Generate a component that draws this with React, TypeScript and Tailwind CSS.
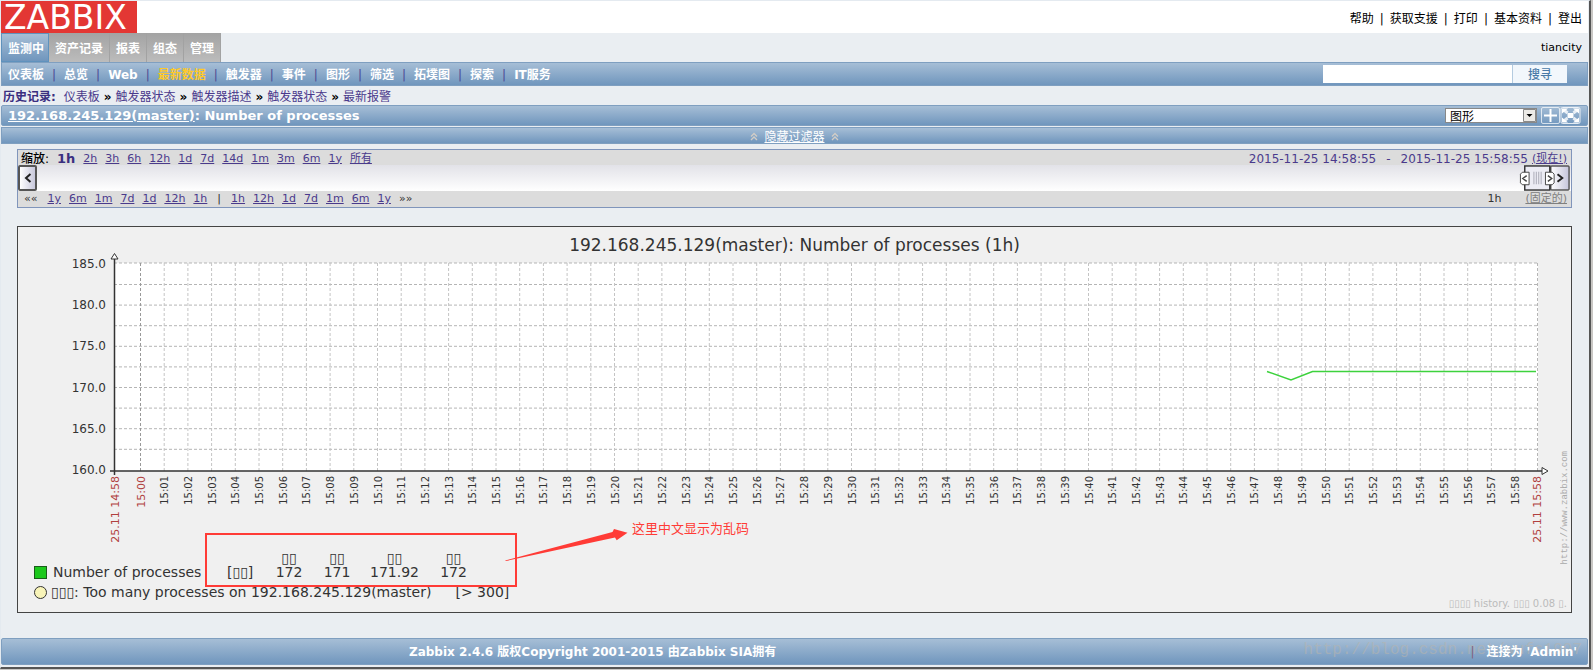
import type { ReactNode } from "react";

const MENU = ["资产记录", "报表", "组态", "管理"];
const SUBMENU = ["仪表板", "总览", "Web", "最新数据", "触发器", "事件", "图形", "筛选", "拓墣图", "探索", "IT服务"];
const HISTORY = ["仪表板", "触发器状态", "触发器描述", "触发器状态", "最新报警"];
const TOP_LINKS = ["帮助", "获取支援", "打印", "基本资料", "登出"];
const ZOOMS = ["2h", "3h", "6h", "12h", "1d", "7d", "14d", "1m", "3m", "6m", "1y", "所有"];
const MOVE_LEFT = ["1y", "6m", "1m", "7d", "1d", "12h", "1h"];
const MOVE_RIGHT = ["1h", "12h", "1d", "7d", "1m", "6m", "1y"];

const pad = (n: number) => String(n).padStart(2, "0");

function Bar({ className, children }: { className: string; children: ReactNode }) {
  return (
    <div className={`flex items-center border border-[#7f9fc0] bg-linear-to-b from-[#a6bed6] to-[#7096bd] ${className}`}>
      {children}
    </div>
  );
}

function ZoomLink({ children }: { children: ReactNode }) {
  return (
    <a href="#" className="text-[#4a3a8c] underline">
      {children}
    </a>
  );
}

function Chevrons() {
  return (
    <svg width="8" height="9" viewBox="0 0 8 9" fill="none" stroke="#d2cdc6" strokeWidth="1.3" aria-hidden="true">
      <path d="M1 4.5 4 1.5 7 4.5M1 8 4 5 7 8" />
    </svg>
  );
}

function Header() {
  return (
    <header className="text-[12px]">
      <div className="flex h-8 items-center justify-between bg-white pr-1.5">
        <a href="#" aria-label="ZABBIX" className="h-8 w-[136px] bg-[#e33734]">
          <svg width="136" height="32" viewBox="0 0 136 32" className="overflow-visible" aria-hidden="true">
            <text x="3" y="28" fontSize="33" fill="#fff">
              ZABBIX
            </text>
          </svg>
        </a>
        <nav className="flex items-center gap-1.5 pt-1 text-black">
          {TOP_LINKS.map((link, i) => (
            <span key={link} className="flex gap-1.5">
              {i > 0 && <span>|</span>}
              <a href="#">{link}</a>
            </span>
          ))}
        </nav>
      </div>

      <div className="flex h-[29px] items-stretch justify-between pr-1.5">
        <nav className="flex font-bold text-white">
          <a href="#" className="flex items-center border border-[#5f92bd] bg-linear-to-b from-[#a6bed6] to-[#7096bd] pt-0.5 pr-1 pl-1.5">
            监测中
          </a>
          {MENU.map((item) => (
            <a key={item} href="#" className="flex items-center border-r border-[#a2a2a2] bg-linear-to-b from-[#a3a3a3] to-[#bcbcbc] px-1.5 pt-0.5">
              {item}
            </a>
          ))}
        </nav>
        <span className="self-center text-[11px] text-black">tiancity</span>
      </div>

      <Bar className="h-6 justify-between pr-5 pl-1.5">
        <nav className="flex items-center pt-0.5 font-bold text-white">
          {SUBMENU.map((item, i) => (
            <span key={item} className="flex">
              {i > 0 && <span className="mx-2 font-normal text-[#4a4a94]">|</span>}
              <a href="#" className={item === "最新数据" ? "text-[#fec92a]" : ""}>
                {item}
              </a>
            </span>
          ))}
        </nav>
        <form className="flex h-[18px]">
          <input type="text" aria-label="搜寻" className="w-[190px] border-r border-[#b4cbe0] bg-white px-1" />
          <button type="button" className="w-[54px] bg-[#f2f7fc] pt-0.5 font-medium text-[#4a7aa8]">
            搜寻
          </button>
        </form>
      </Bar>

      <nav className="flex h-[19px] items-center gap-1 pt-0.5 pl-0.5 text-[#4a3a8c]">
        <b className="mr-1 text-[#3a2f80]">历史记录:</b>
        {HISTORY.map((item, i) => (
          <span key={i} className="flex gap-1">
            {i > 0 && <b className="text-black">»</b>}
            <a href="#">{item}</a>
          </span>
        ))}
      </nav>
    </header>
  );
}

function TitleBar() {
  return (
    <>
      <Bar className="h-[21px] justify-between rounded-xs pr-1.5 pl-1.5">
        <h1 className="text-[13px] font-bold text-white">
          <a href="#" className="underline">
            192.168.245.129(master)
          </a>
          : Number of processes
        </h1>
        <div className="flex items-center gap-1">
          <div className="relative flex h-[15px] w-[92px] bg-white">
            <select aria-label="图形" className="w-full appearance-none border border-[#888] bg-white pl-1 text-[12px] text-black">
              <option>图形</option>
            </select>
            <svg className="pointer-events-none absolute top-px right-px" width="13" height="13" viewBox="0 0 13 13" aria-hidden="true">
              <path d="M.5.5h12v12H.5z" fill="#eceae6" stroke="#8a8a8a" />
              <path d="M3.5 5h6l-3 3z" fill="#000" />
            </svg>
          </div>
          <div className="flex">
            <button type="button" aria-label="添加">
              <svg width="19" height="17" viewBox="0 0 19 17" fill="none" stroke="#fff">
                <rect x=".5" y=".5" width="18" height="16" rx="1.5" strokeOpacity=".7" />
                <path d="M9.5 2v13M3 8.500h13" strokeWidth="2" />
              </svg>
            </button>
            <button type="button" aria-label="全屏">
              <svg width="21" height="17" viewBox="0 0 21 17" fill="none" stroke="#fff">
                <rect x="1" y=".5" width="19" height="16" rx="1.5" strokeOpacity=".8" />
                <path d="M4 3l3.500 3M17 3l-3.500 3M4 14l3.500-3M17 14l-3.500-3" strokeWidth="3" strokeOpacity=".8" />
                <path d="M2 1.500h6l-6 5zM19 1.500h-6l6 5zM2 15.500h6l-6-5zM19 15.500h-6l6-5zM7.500 6h6v5h-6z" fill="#fff" stroke="none" />
              </svg>
            </button>
          </div>
        </div>
      </Bar>
      <Bar className="mt-px h-[17px] justify-center gap-1.5 pt-0.5">
        <Chevrons />
        <a href="#" className="text-[12px] text-white underline">
          隐藏过滤器
        </a>
        <Chevrons />
      </Bar>
    </>
  );
}

function TimeControl() {
  return (
    <section className="mx-4 mt-[5px] border border-[#8095bb] bg-[#dcdcdc]">
      <div className="flex h-[15px] items-center justify-between pt-0.5 pr-1 pl-[3px]">
        <div className="flex items-center gap-2">
          <b className="font-medium text-[12px] text-black">缩放:</b>
          <b className="text-[13px] text-[#3a2f80]">1h</b>
          {ZOOMS.map((z) => (
            <ZoomLink key={z}>{z}</ZoomLink>
          ))}
        </div>
        <div className="flex items-center text-[12px] text-[#4a3a8c]">
          <a href="#">2015-11-25 14:58:55</a>
          <span className="mx-2.5">-</span>
          <a href="#">2015-11-25 15:58:55</a>
          <a href="#" className="ml-1 text-[11px] underline">
            (现在!)
          </a>
        </div>
      </div>

      <div className="flex h-[26px] items-stretch justify-between bg-linear-to-b from-[#e2e2e8] to-white">
        <button type="button" aria-label="后退" className="flex w-[19px] items-center justify-center rounded-xs border-2 border-[#555] bg-linear-to-r from-white to-[#c8c8dc]">
          <svg width="8" height="10" viewBox="0 0 8 10" fill="none" stroke="#222" strokeWidth="2">
            <path d="M6.5 1 2 5l4.500 4" />
          </svg>
        </button>
        <svg width="53" height="26" viewBox="0 0 53 27" aria-label="时间滑块">
          <defs>
            <linearGradient id="knob">
              <stop offset="0" stopColor="#fff" />
              <stop offset="1" stopColor="#c4c4da" />
            </linearGradient>
          </defs>
          <rect x="33" y="1" width="19" height="25" rx="1" fill="url(#knob)" stroke="#555" strokeWidth="1.5" />
          <path d="M40 9.500l5 4-5 4" fill="none" stroke="#222" strokeWidth="2" />
          <rect x="6" y="1" width="26" height="25" fill="#ececf4" stroke="#333" strokeWidth="1.5" />
          <path d="M15.500 7v13M18 7v13M20.500 7v13M23 7v13" stroke="#a9a9b5" />
          <g fill="#fff" stroke="#444">
            <path d="M1.500 9.500l2-2h7v13h-7l-2-2zM36.500 9.500l-2-2h-7v13h7l2-2z" />
            <path d="M8 11l-4 3 4 3M30 11l4 3-4 3" fill="none" strokeWidth="1.5" />
          </g>
        </svg>
      </div>

      <div className="flex h-4 items-center justify-between pr-1 pl-1.5">
        <div className="flex items-center gap-2 text-[#333]">
          <button type="button" className="mr-0.5">««</button>
          {MOVE_LEFT.map((m) => (
            <ZoomLink key={m}>{m}</ZoomLink>
          ))}
          <span className="mx-0.5">|</span>
          {MOVE_RIGHT.map((m) => (
            <ZoomLink key={m}>{m}</ZoomLink>
          ))}
          <button type="button">»»</button>
        </div>
        <div className="flex items-center gap-6 text-[#333]">
          <span>1h</span>
          <a href="#" className="text-[#808080] underline">
            (固定的)
          </a>
        </div>
      </div>
    </section>
  );
}

function Plot() {
  const minutes = Array.from({ length: 59 }, (_, m) => ({ m, x: 122.5 + m * 23.7 }));
  const rows = Array.from({ length: 9 }, (_, i) => 29.5 + i * 20.6);

  return (
    <svg viewBox="0 0 1553 290" className="block w-full overflow-visible" role="img" aria-label="Number of processes">
      <rect x="96" y="8" width="1424" height="208" fill="#fff" />
      <g stroke="#b5b5b5" strokeDasharray="3 2">
        <path d="M96 8H1520" />
        {rows.map((y) => (
          <path key={y} d={`M96 ${y}H1520`} />
        ))}
        {minutes.map(({ m, x }) => (
          <path key={m} d={`M${x} 8V216`} stroke={m === 0 ? "#999" : "#c4c4c4"} />
        ))}
        <path d="M1519.5 8V216" />
      </g>
      <path d="M96.500 3V220M92 216H1524" stroke="#333" strokeWidth="1.5" />
      <path d="M93 4h7l-3.500-5.500zM1524 212.500v7l6-3.500z" fill="#fff" stroke="#333" />
      <path d="M1249 116.500l24 8.500 21.500-8.500H1518" fill="none" stroke="#3dd23d" strokeWidth="1.5" />

      <g fontSize="12" fill="#333" textAnchor="end">
        {[185, 180, 175, 170, 165, 160].map((v, i) => (
          <text key={v} x="88" y={13 + i * 41.2}>
            {v.toFixed(1)}
          </text>
        ))}
      </g>
      <g textAnchor="end">
        {minutes.map(({ m, x }) => (
          <text
            key={m}
            transform={`translate(${x + 4} 221) rotate(-90)`}
            fontSize={m === 0 ? 11 : 10}
            fill={m === 0 ? "#b04040" : "#333"}
          >
            15:{pad(m)}
          </text>
        ))}
        <g fontSize="11" fill="#b04040">
          <text transform="translate(101 221) rotate(-90)">25.11 14:58</text>
          <text transform="translate(1523 221) rotate(-90)">25.11 15:58</text>
        </g>
      </g>
    </svg>
  );
}

function Legend() {
  return (
    <div className="pt-1.5 pl-4 text-[14px] leading-[14px] text-[#333]">
      <table className="border-collapse">
        <thead>
          <tr className="text-center">
            <td colSpan={2} />
            <th className="w-12 font-normal">▯▯</th>
            <th className="w-12 font-normal">▯▯</th>
            <th className="w-[67px] font-normal">▯▯</th>
            <th className="w-[51px] font-normal">▯▯</th>
          </tr>
        </thead>
        <tbody>
          <tr className="text-center">
            <td>
              <span className="flex w-[193px] items-center gap-1.5">
                <span className="size-[13px] border border-[#1a5c1a] bg-[#1cc81c]" />
                Number of processes
              </span>
            </td>
            <td className="w-[38px] text-left">[▯▯]</td>
            <td>172</td>
            <td>171</td>
            <td>171.92</td>
            <td>172</td>
          </tr>
        </tbody>
      </table>
      <div className="mt-1.5 flex items-center">
        <span className="mr-1 size-[13px] rounded-full border border-[#333] bg-[#f8f4b8]" />
        <span>▯▯▯: Too many processes on 192.168.245.129(master)</span>
        <span className="ml-6">[&gt; 300]</span>
      </div>
    </div>
  );
}

function Graph() {
  return (
    <section className="relative mx-4 mt-[18px] border border-[#444] bg-[#f0f0f0] pb-[13px]">
      <h2 className="pt-2 text-center text-[17px] leading-5 text-[#333]">
        192.168.245.129(master): Number of processes (1h)
      </h2>
      <Plot />
      <Legend />
      <div className="absolute top-[306px] left-[187px] h-[54px] w-[312px] border-2 border-[#ff3b36]" />
      <div className="absolute top-[290px] left-[487px] flex items-start gap-1">
        <svg width="123" height="46" viewBox="0 0 123 46" fill="#ff3b36" aria-hidden="true">
          <path d="M0 43.500 107.500 15 109 12l13.500 3.700-10.800 7.600-1.700-2.800L1 44z" />
        </svg>
        <span className="pt-1 text-[13px] text-[#ff3b36]">这里中文显示为乱码</span>
      </div>
      <p className="absolute right-1 bottom-0 text-[10px] text-[#bbb]">▯▯▯▯ history. ▯▯▯ 0.08 ▯.</p>
      <p className="absolute right-0 bottom-12 rotate-180 font-['Liberation_Mono',monospace] text-[9px] leading-3 text-[#aaa] [writing-mode:vertical-rl]">
        http://www.zabbix.com
      </p>
    </section>
  );
}

function Footer() {
  return (
    <footer className="relative mt-[25px] text-[12px]">
      <Bar className="h-[27px] rounded-xs pr-2.5 font-bold text-white">
        <span className="w-3/4 text-center">Zabbix 2.4.6 版权Copyright 2001-2015 由Zabbix SIA拥有</span>
        <span className="z-10 flex flex-1 justify-end gap-3">
          <span className="font-normal text-[#84607c]">|</span>
          连接为 'Admin'
        </span>
      </Bar>
      <p className="absolute top-0.5 right-1.5 font-['Liberation_Mono',monospace] text-[16px] leading-5 text-[#b4b4b0]/60">
        http://blog.csdn.net/wufs1997
      </p>
    </footer>
  );
}

export default function App() {
  return (
    <div className="bg-[#c9c7c4] pr-[2px] pb-px">
      <div className="border-t border-r-2 border-b-2 border-l border-t-[#e4eaf0] border-r-[#555] border-b-[#555] border-l-[#e4eaf0] bg-[#eaeef2] pr-px pb-0.5 font-['DejaVu_Sans','Noto_Sans_CJK_SC',sans-serif] text-[11px] leading-4">
        <Header />
        <TitleBar />
        <TimeControl />
        <Graph />
        <Footer />
      </div>
    </div>
  );
}
